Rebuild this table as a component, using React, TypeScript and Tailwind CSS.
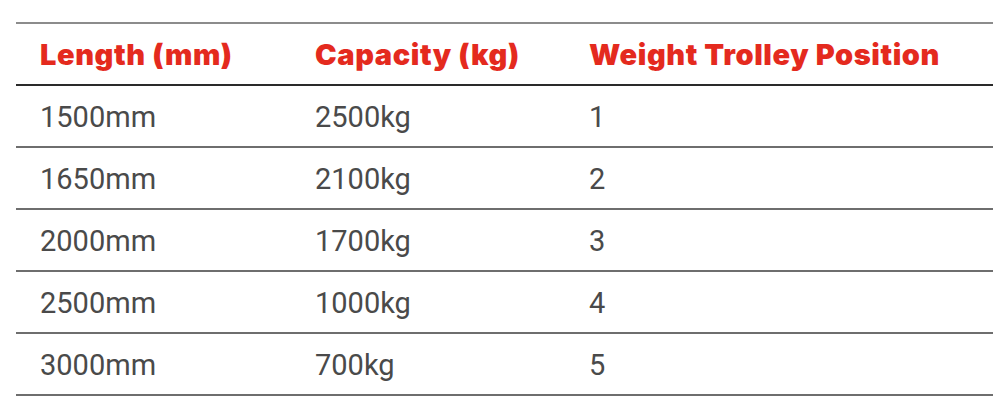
const rows = [
  ['1500mm', '2500kg', '1'],
  ['1650mm', '2100kg', '2'],
  ['2000mm', '1700kg', '3'],
  ['2500mm', '1000kg', '4'],
  ['3000mm', '700kg', '5'],
];

export default function App() {
  return (
    <div className="min-h-[420px] bg-white pl-4 pt-[22px]" style={{ fontFamily: 'Roboto, "Liberation Sans", sans-serif' }}>
      <div className="border-t-2 border-[#8c8c8c]">
        {/* header */}
        <div
          className="grid grid-cols-[275px_274px_1fr] h-[62px] items-center pt-[2px] border-b-2 border-[#2a2a2a] text-[29px] tracking-[0.6px] font-black text-[#e42a1e]"
          style={{ fontFamily: 'Inter, "DejaVu Sans", sans-serif' }}
        >
          <div className="pl-6">Length (mm)</div>
          <div className="pl-6">Capacity (kg)</div>
          <div className="pl-6">Weight Trolley Position</div>
        </div>
        {rows.map((r) => (
          <div key={r[0]} className="grid grid-cols-[275px_274px_1fr] h-[62px] items-center pt-[3px] border-b-2 border-[#6e6e6e] text-[29px] text-[#4a4a4a]">
            <div className="pl-6">{r[0]}</div>
            <div className="pl-6">{r[1]}</div>
            <div className="pl-6">{r[2]}</div>
          </div>
        ))}
      </div>
    </div>
  );
}
